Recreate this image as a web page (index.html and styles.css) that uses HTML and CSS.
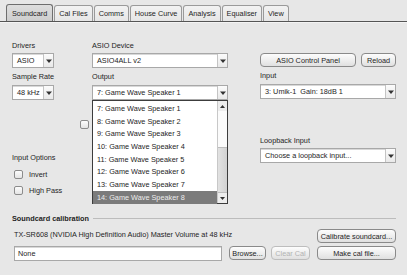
FILE: index.html
```html
<!DOCTYPE html>
<html>
<head>
<meta charset="utf-8">
<link rel="stylesheet" href="styles.css">
</head>
<body>
<div class="window">
  <div class="tabbar">
    <div class="tab active">Soundcard</div>
    <div class="tab">Cal Files</div>
    <div class="tab">Comms</div>
    <div class="tab">House Curve</div>
    <div class="tab">Analysis</div>
    <div class="tab">Equaliser</div>
    <div class="tab">View</div>
  </div>
  <div class="panel">
    <div class="top">
      <div class="col c1">
        <div class="label">Drivers</div>
        <div class="combo"><span class="val">ASIO</span><span class="arrow"><svg width="6" height="4" viewBox="0 0 6 4"><path d="M0 0.5H6L3 4Z" fill="#333"/></svg></span></div>
        <div class="label mt">Sample Rate</div>
        <div class="combo"><span class="val">48 kHz</span><span class="arrow"><svg width="6" height="4" viewBox="0 0 6 4"><path d="M0 0.5H6L3 4Z" fill="#333"/></svg></span></div>
        <div class="label opts">Input Options</div>
        <div class="check first"><span class="box"></span><span>Invert</span></div>
        <div class="check"><span class="box"></span><span>High Pass</span></div>
      </div>
      <div class="col c2">
        <div class="label">ASIO Device</div>
        <div class="combo"><span class="val">ASIO4ALL v2</span><span class="arrow"><svg width="6" height="4" viewBox="0 0 6 4"><path d="M0 0.5H6L3 4Z" fill="#333"/></svg></span></div>
        <div class="label mt">Output</div>
        <div class="combo open"><span class="val">7: Game Wave Speaker 1</span><span class="arrow"><svg width="6" height="4" viewBox="0 0 6 4"><path d="M0 0.5H6L3 4Z" fill="#333"/></svg></span>
          <div class="list">
            <div class="items">
              <div class="item">7: Game Wave Speaker 1</div>
              <div class="item">8: Game Wave Speaker 2</div>
              <div class="item">9: Game Wave Speaker 3</div>
              <div class="item">10: Game Wave Speaker 4</div>
              <div class="item">11: Game Wave Speaker 5</div>
              <div class="item">12: Game Wave Speaker 6</div>
              <div class="item">13: Game Wave Speaker 7</div>
              <div class="item sel">14: Game Wave Speaker 8</div>
            </div>
            <div class="scroll">
              <div class="sbtn"><svg width="5" height="3" viewBox="0 0 5 3"><path d="M0 3H5L2.5 0Z" fill="#333"/></svg></div>
              <div class="track"><div class="thumb"></div></div>
              <div class="sbtn"><svg width="5" height="3" viewBox="0 0 5 3"><path d="M0 0H5L2.5 3Z" fill="#333"/></svg></div>
            </div>
          </div>
        </div>
        <div class="check hidden-check"><span class="box"></span></div>
      </div>
      <div class="col c3">
        <div class="btnrow">
          <div class="btn wide">ASIO Control Panel</div>
          <div class="btn reload">Reload</div>
        </div>
        <div class="label mt">Input</div>
        <div class="combo"><span class="val">3: Umik-1&nbsp; Gain: 18dB 1</span><span class="arrow"><svg width="6" height="4" viewBox="0 0 6 4"><path d="M0 0.5H6L3 4Z" fill="#333"/></svg></span></div>
        <div class="label loop">Loopback Input</div>
        <div class="combo"><span class="val">Choose a loopback input...</span><span class="arrow"><svg width="6" height="4" viewBox="0 0 6 4"><path d="M0 0.5H6L3 4Z" fill="#333"/></svg></span></div>
      </div>
    </div>
    <div class="cal">
      <div class="cal-head"><span class="bold">Soundcard calibration</span><span class="rule"></span></div>
      <div class="cal-grid">
        <div class="info">TX-SR608 (NVIDIA High Definition Audio) Master Volume at 48 kHz</div>
        <div class="btn calib">Calibrate soundcard...</div>
        <div class="field">None</div>
        <div class="btn browse">Browse...</div>
        <div class="btn clear disabled">Clear Cal</div>
        <div class="btn make">Make cal file...</div>
      </div>
    </div>
  </div>
</div>
</body>
</html>
```

FILE: styles.css
```css
* { box-sizing: border-box; }
html, body {
  margin: 0;
  padding: 0;
  background: #e7e7e7;
}
body {
  width: 407px;
  height: 275px;
  overflow: hidden;
  font-family: "Liberation Sans", Arial, sans-serif;
  font-size: 7.3px;
  line-height: 9px;
  color: #1e1e1e;
}
.window {
  width: 407px;
  height: 275px;
}
.tabbar {
  height: 22px;
  display: flex;
  align-items: flex-end;
  padding-left: 6px;
  border-bottom: 1px solid #555;
  box-shadow: 0 1px 0 #f4f4f4;
}
.tab {
  height: 16px;
  padding: 0 4px;
  display: flex;
  align-items: center;
  border: 1px solid #9a9a9a;
  border-bottom: none;
  border-radius: 3px 3px 0 0;
  background: linear-gradient(#f2f2f2, #e6e6e6);
  margin-right: 1px;
  white-space: nowrap;
}
.tab.active {
  height: 17px;
  padding: 0 5px;
  background: linear-gradient(#dedede, #cdcdcd);
  border-color: #6e6e6e;
}
.panel {
  padding: 19px 11px 0 12px;
}
.top {
  display: flex;
}
.col {
  display: flex;
  flex-direction: column;
}
.c1 { width: 42px; }
.c2 { width: 136px; margin-left: 38px; }
.c3 { width: 136px; margin-left: 32px; padding-top: 12px; }
.label { height: 9px; white-space: nowrap; }
.combo + .label.mt, .btnrow + .label.mt { margin-top: 4px; }
.combo {
  position: relative;
  height: 15px;
  margin-top: 3px;
  display: flex;
  background: #fff;
  border: 1px solid #a8a8a8;
  box-shadow: inset 0 1px 0 #d8d8d8;
}
.label.mt + .combo { margin-top: 4px; }
.val {
  flex: 1;
  padding-left: 4px;
  display: flex;
  align-items: center;
  white-space: nowrap;
  overflow: hidden;
}
.arrow {
  width: 10px;
  border-left: 1px solid #c4c4c4;
  background: linear-gradient(#fbfbfb, #e9e9e9);
  display: flex;
  align-items: center;
  justify-content: center;
}
.opts { margin-top: 53px; }
.check {
  display: flex;
  align-items: center;
  height: 9px;
  margin-left: 2px;
  margin-top: 7px;
  gap: 6px;
  white-space: nowrap;
}
.check.first { margin-top: 8px; }
.box {
  flex: none;
  width: 9px;
  height: 9px;
  border: 1px solid #8c8c8c;
  border-radius: 2px;
  background: linear-gradient(#fdfdfd, #e4e4e4);
}
.hidden-check { margin-left: -12px; margin-top: 20px; }
.list {
  position: absolute;
  left: -1px;
  right: -1px;
  top: 14px;
  height: 104px;
  background: #fff;
  border: 1px solid #3c3c3c;
  display: flex;
  z-index: 5;
}
.items {
  flex: 1;
  padding-top: 1px;
}
.item {
  height: 12.7px;
  padding-left: 4px;
  display: flex;
  align-items: center;
  white-space: nowrap;
}
.item.sel {
  background: #7b7b7b;
  color: #ececec;
}
.scroll {
  width: 10px;
  display: flex;
  flex-direction: column;
  border-left: 1px solid #c8c8c8;
  background: #f4f4f4;
}
.sbtn {
  height: 10px;
  display: flex;
  align-items: center;
  justify-content: center;
  background: #ededed;
}
.track {
  flex: 1;
  display: flex;
  flex-direction: column;
  justify-content: flex-end;
  background: #fbfbfb;
}
.thumb {
  height: 46px;
  background: linear-gradient(90deg, #e2e2e2, #d2d2d2);
  border-top: 1px solid #bdbdbd;
  border-bottom: 1px solid #bdbdbd;
}
.btnrow {
  display: flex;
  gap: 5px;
}
.btn {
  height: 14px;
  display: flex;
  align-items: center;
  justify-content: center;
  border: 1px solid #8a8a8a;
  border-radius: 4px;
  background: linear-gradient(#fdfdfd, #e0e0e0);
  white-space: nowrap;
}
.btn.wide { width: 96px; }
.btn.reload { width: 35px; }
.btn.disabled { color: #b3b3b3; border-color: #bdbdbd; }
.loop { margin-top: 37px; }
.cal-head {
  display: flex;
  align-items: center;
  gap: 4px;
  height: 9px;
  margin-top: 19px;
}
.bold { font-weight: bold; white-space: nowrap; }
.rule {
  flex: 1;
  height: 1px;
  background: #bcbcbc;
}
.cal-grid {
  display: grid;
  grid-template-columns: 210px 37px 41px 79px;
  column-gap: 5px;
  row-gap: 3px;
  padding-left: 2px;
  margin-top: 6px;
}
.info {
  grid-column: 1 / 4;
  white-space: nowrap;
  padding-top: 1px;
}
.calib { grid-column: 4; }
.field {
  height: 15px;
  background: #fff;
  border: 1px solid #a8a8a8;
  box-shadow: inset 0 1px 0 #d8d8d8;
  padding-left: 3px;
  display: flex;
  align-items: center;
  margin-right: 2px;
}
.clear { margin-right: 2px; }
```
